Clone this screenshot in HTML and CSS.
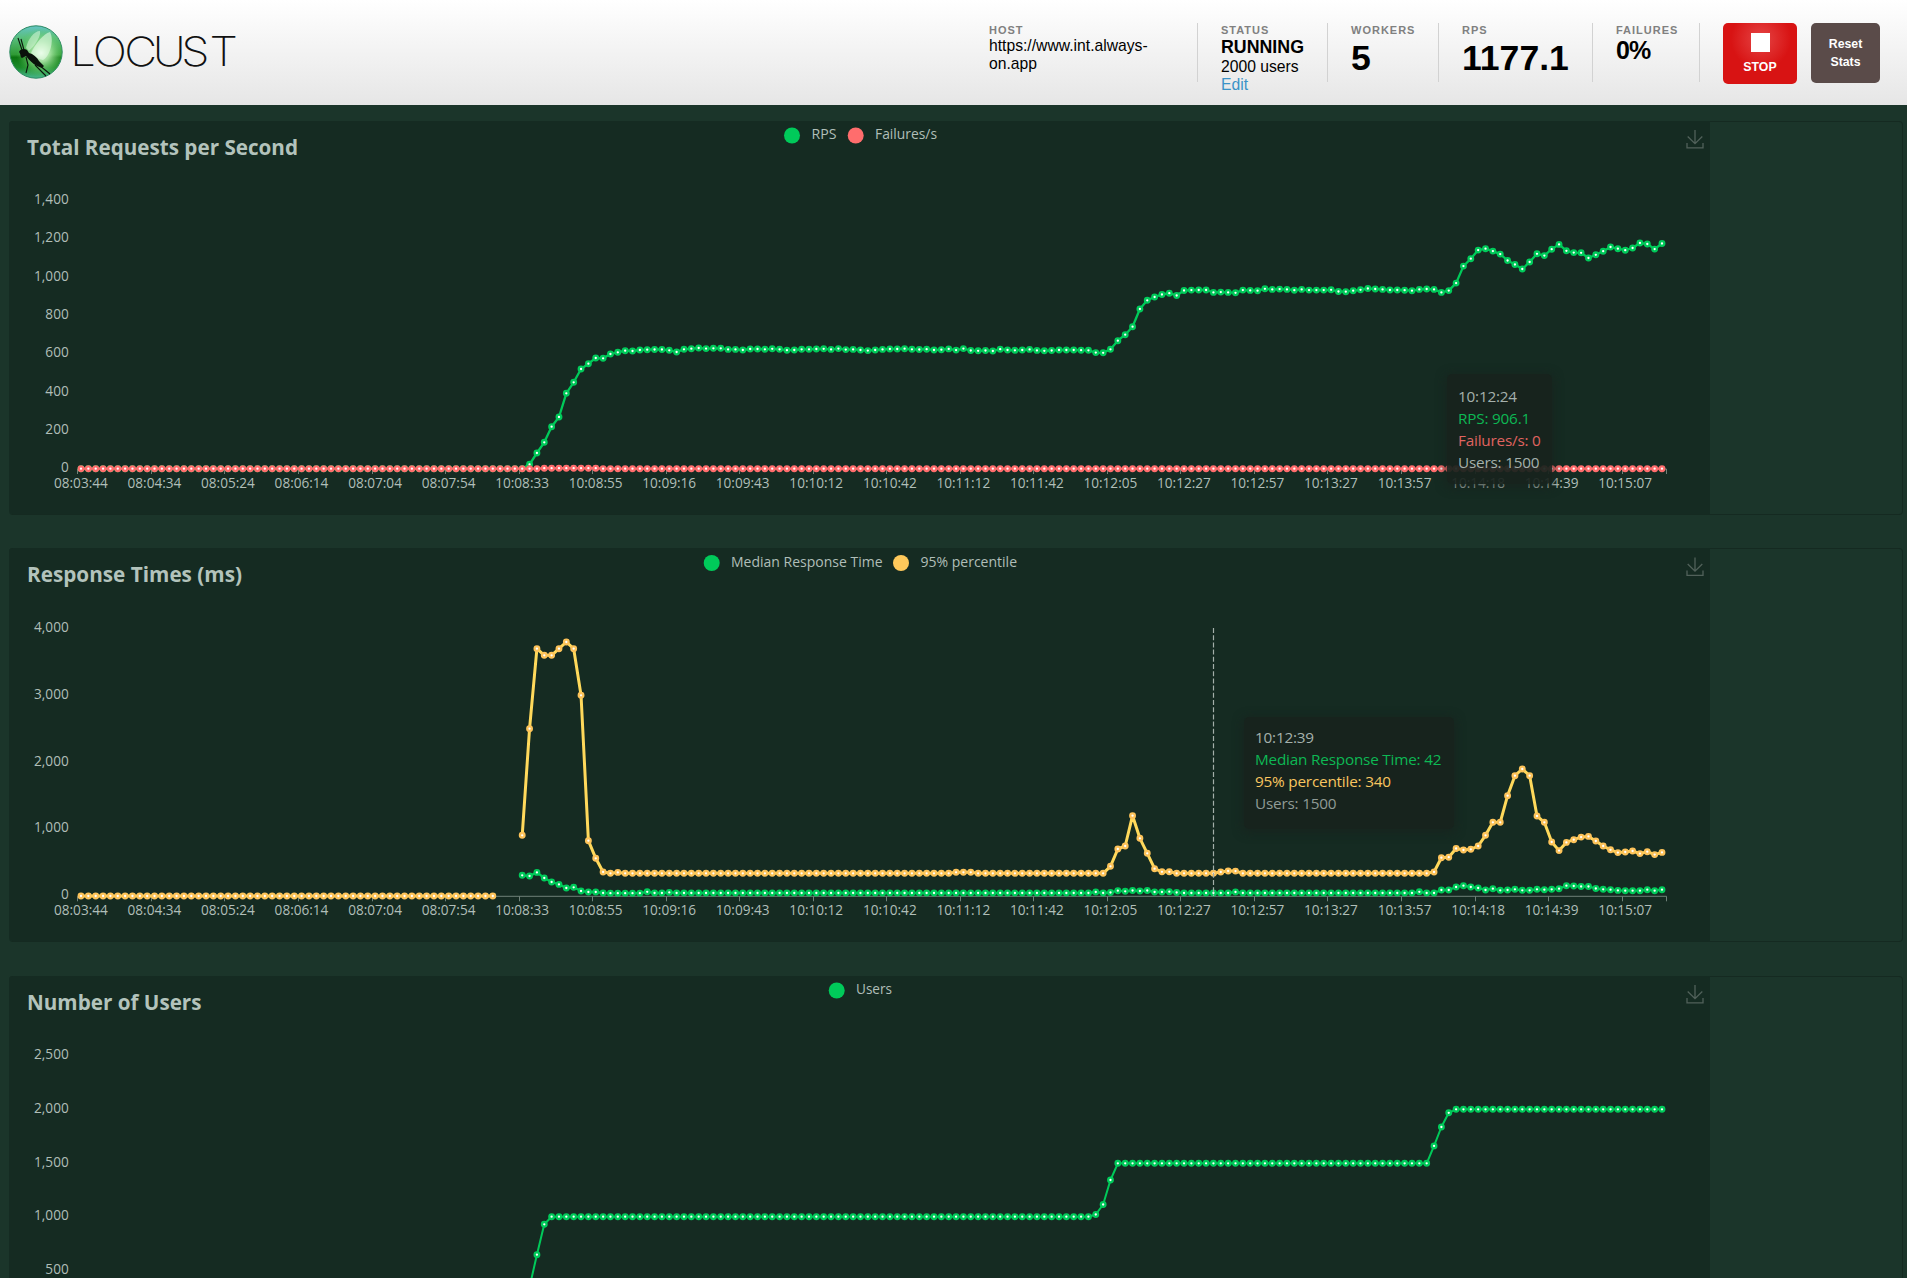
FILE: index.html
```html
<!DOCTYPE html>
<html lang="en">
<head>
<meta charset="utf-8">
<title>Locust</title>
<link rel="stylesheet" href="styles.css">
</head>
<body>
<header class="top">
  <svg class="logo" width="240" height="105" viewBox="0 0 240 105" role="img" aria-label="Locust">
    <defs>
      <linearGradient id="ball" x1="0" y1="0" x2="0" y2="1">
        <stop offset="0" stop-color="#63c3c4"/><stop offset=".22" stop-color="#5abf80"/>
        <stop offset=".55" stop-color="#2f9a35"/><stop offset=".6" stop-color="#0b7410"/>
        <stop offset=".8" stop-color="#1c8b2b"/><stop offset="1" stop-color="#48b790"/>
      </linearGradient>
      <radialGradient id="glow" cx=".6" cy=".52" r=".48">
        <stop offset="0" stop-color="#f0fff0"/><stop offset=".35" stop-color="#b5edb0" stop-opacity=".85"/>
        <stop offset="1" stop-color="#4dc24a" stop-opacity="0"/>
      </radialGradient>
    </defs>
    <circle cx="36" cy="52" r="26.2" fill="url(#ball)" stroke="#2c8a62"/>
    <circle cx="36" cy="52" r="26" fill="url(#glow)"/>
    <path d="M26 48C28 39 34 31 40 31C41 36 36 44 29 51Z" fill="#d9f7dd" opacity=".55"/>
    <path d="M31 53C36 43 43 34 50 32C54 39 51 55 43 60C38 59 34 57 31 53Z" fill="#e6fbe6" opacity=".6"/>
    <path d="M19 52C20 49 24 48 27 50L29 53C33 54 37 57 39 61L44 66L42 68L37 66C33 64 29 60 26 56L22 58C20 57 21 54 19 52Z" fill="#0a120b"/>
    <path d="M22 50L18 38M24 50L21 39M26 57L28 65L26 73M35 65L46 76M39 65L50 74" fill="none" stroke="#0a160c" stroke-width="1.1"/>
    <text class="wordmark" transform="scale(1.12 1)" y="66" x="62.7 82.8 111 136.4 161.8 187">LOCUST</text>
  </svg>
  <div class="stats">
    <div class="stat host"><div class="label">HOST</div><div class="text">https://www.int.always-on.app</div></div>
    <div class="stat status"><div class="label">STATUS</div><div class="state">RUNNING</div><div class="text">2000 users</div><a class="edit">Edit</a></div>
    <div class="stat workers"><div class="label">WORKERS</div><div class="big">5</div></div>
    <div class="stat rps"><div class="label">RPS</div><div class="big">1177.1</div></div>
    <div class="stat failures"><div class="label">FAILURES</div><div class="medium">0%</div></div>
  </div>
  <div class="btn stop"><span class="square"></span>STOP</div>
  <div class="btn reset">Reset<br>Stats</div>
</header>
<main class="charts">
  <section class="panel"><svg id="rps" class="chart" width="1701" height="393" viewBox="9 121 1701 393"></svg>
    <div class="tip tip-rps"><div>10:12:24</div><div class="green">RPS: 906.1</div><div class="red">Failures/s: 0</div><div>Users: 1500</div></div>
  </section>
  <section class="panel"><svg id="times" class="chart" width="1701" height="393" viewBox="9 548 1701 393"></svg>
    <div class="tip tip-times"><div>10:12:39</div><div class="green">Median Response Time: 42</div><div class="yellow">95% percentile: 340</div><div class="dim">Users: 1500</div></div>
  </section>
  <section class="panel last"><svg id="users" class="chart" width="1701" height="393" viewBox="9 976 1701 393"></svg></section>
</main>
<script src="charts.js"></script>
</body>
</html>
```
FILE: styles.css
```css
* { box-sizing: border-box; }
body { margin: 0; height: 1278px; overflow: hidden; background: #1b352a; font-family: "Liberation Sans", Arial, sans-serif; }
.top { display: flex; align-items: flex-start; height: 105px; padding-right: 27px; background: linear-gradient(#fff, #e6e6e6); }
.logo { display: block; }
.wordmark { font: 200 40.5px Inter, Lato, sans-serif; fill: #111; }
.stats { display: flex; margin: 23px 23px 0 auto; }
.stat { height: 59px; padding-left: 23px; border-right: 1px solid #d2d2d2; color: #000; white-space: nowrap; }
.host { width: 232px; padding-right: 23px; white-space: normal; }
.status { width: 130px; }
.workers { width: 111px; }
.rps { width: 154px; }
.failures { width: 107px; }
.label { height: 14px; line-height: 14px; font-size: 11px; font-weight: bold; letter-spacing: 1px; color: #808080; }
.text, .edit { display: block; font-size: 15.7px; line-height: 18px; }
.state { font-size: 17.8px; font-weight: bold; line-height: 21px; }
.edit { color: #3b93c7; }
.big { font-size: 35.6px; font-weight: bold; line-height: 42px; }
.medium { font-size: 25px; font-weight: bold; line-height: 27px; letter-spacing: -1px; }
.btn { margin-top: 23px; border-radius: 5px; color: #fff; font-size: 12.3px; font-weight: bold; text-align: center; }
.stop { display: flex; flex-direction: column; align-items: center; width: 74px; height: 61px; padding-top: 10px; line-height: 30px; background: radial-gradient(circle at 38px 16px, #e54545, #d81313 30px); }
.square { flex: none; width: 19px; height: 19px; background: #fff; }
.reset { width: 69px; height: 60px; margin-left: 14px; padding-top: 12px; line-height: 18px; background: #5a4b49; }
.charts { display: flex; flex-direction: column; gap: 33px; height: 1173px; overflow: hidden; padding: 16px 4px 0 9px; }
.panel { position: relative; flex: none; height: 394px; border: 1px solid #152a21; border-left: 0; border-radius: 4px; }
.last { margin-top: 1px; }
.chart { display: block; margin-top: -1px; border-radius: 4px 0 0 4px; background: #152b22; }
.chart text { font-family: "Open Sans", "Noto Sans", sans-serif; font-size: 13.6px; fill: #b0beb8; }
.chart .title { font-size: 22px; font-weight: bold; fill: #b3c3bc; }
.chart .legend { font-size: 13.8px; }
.tip { position: absolute; border-radius: 5px; background: rgba(24, 34, 29, .93); box-shadow: 0 2px 10px 2px rgba(24, 34, 29, .65); color: #a5b1ac; font: 15.3px/22px "Open Sans", "Noto Sans", sans-serif; letter-spacing: -.2px; white-space: nowrap; }
.tip-rps { left: 1438px; top: 252px; width: 105px; height: 110px; padding: 11px; }
.tip-times { left: 1235px; top: 168px; width: 210px; height: 112px; padding: 9px 11px; }
.green { color: #0db854; }
.red { color: #e06460; }
.yellow { color: #f9c660; }
.dim { color: #909b96; }
```
FILE: charts.js
```js
const NS = "http://www.w3.org/2000/svg";
const X0 = 81, STEP = 7.3535;
const GREEN = "#00ca5a", RED = "#ff6d6d", YELLOW = "#ffd95b";
const times = ["08:03:44","08:04:34","08:05:24","08:06:14","08:07:04","08:07:54","10:08:33","10:08:55","10:09:16","10:09:43","10:10:12","10:10:42","10:11:12","10:11:42","10:12:05","10:12:27","10:12:57","10:13:27","10:13:57","10:14:18","10:14:39","10:15:07"];
const rep = (v, n) => Array(n).fill(v);
const xAt = i => X0 + i * STEP;

function add(svg, tag, attrs, text) {
  const el = document.createElementNS(NS, tag);
  for (const k in attrs) el.setAttribute(k, attrs[k]);
  if (text) el.textContent = text;
  svg.appendChild(el);
  return el;
}

function series(svg, ys, start, line, dot, width) {
  const pts = ys.map((y, i) => [xAt(start + i).toFixed(2), y]);
  add(svg, "polyline", { points: pts.join(" "), fill: "none", stroke: line, "stroke-width": width, "stroke-linejoin": "bevel" });
  for (const [x, y] of pts) add(svg, "circle", { cx: x, cy: y, r: 2.3, fill: "#fff", stroke: dot, "stroke-width": 2.3 });
}

function frame(id, o) {
  const svg = document.getElementById(id);
  const t = o.top;
  add(svg, "text", { class: "title", x: 27, y: t + 33.7, textLength: o.titleWidth, lengthAdjust: "spacingAndGlyphs" }, o.title);
  for (const [cx, color, x, w, label] of o.legend) {
    add(svg, "circle", { cx, cy: t + 14.5, r: 8, fill: color });
    add(svg, "text", { class: "legend", x, y: t + 18.3, textLength: w, lengthAdjust: "spacingAndGlyphs" }, label);
  }
  add(svg, "path", { d: `M1695 ${t + 9}v13.5M1687.7 ${t + 15.5}l7.3 7.2l7.3 -7.2M1687 ${t + 22}v4.8h16v-4.8`, fill: "none", stroke: "#51615a", "stroke-width": 1.3 });
  o.labels.forEach((s, i) => add(svg, "text", { x: 68.7, y: o.labelY + i * o.labelStep, "text-anchor": "end" }, s));
  if (!o.axis) return svg;
  const ax = o.axis;
  add(svg, "path", { d: `M78 ${ax}H1666.5`, stroke: "#6f8179", "stroke-width": 1 });
  times.forEach((s, i) => {
    const x = xAt(i * 10);
    add(svg, "path", { d: `M${Math.round(x - 3.6) + .5} ${ax}v5`, stroke: "#6f8179" });
    add(svg, "text", { x: x - .1, y: ax + 18.6, "text-anchor": "middle" }, s);
  });
  add(svg, "path", { d: `M1666.5 ${ax}v5`, stroke: "#6f8179" });
  return svg;
}

const rps = frame("rps", {
  top: 121, title: "Total Requests per Second", titleWidth: 271, axis: 469,
  legend: [[792, GREEN, 811.5, 25, "RPS"], [855.7, RED, 875, 62, "Failures/s"]],
  labels: ["1,400","1,200","1,000","800","600","400","200","0"], labelY: 204, labelStep: 38.33
});
series(rps, [...rep(468.7, 61),
  464.3,453,442.3,426.7,417,393.3,382.3,369,363.7,358,358.3,354,352.3,350.7,351,350,349.7,349.5,349.5,350.3,352,349.3,348.7,348,348.6,348.3,348.3,349.4,349.4,350,349,349,349.3,348.8,349.3,350.2,350,349.3,349.3,349,348.8,349.4,348.6,349.6,349.4,350,350.6,350,349.4,349,349,
  348.7,349.3,349.5,349.2,350,349.7,348.9,350.1,348.6,350.5,350.8,350.5,351,349.2,350,350.3,350,349.4,350.4,350.8,350.5,350,
  350,350,350.2,350.3,352.6,352.8,349.3,340.7,334.7,326.7,309,300.3,297,294.5,293.2,295.5,290.5,290.1,290,290,292.4,292.1,292.4,292.8,290.1,290.4,290.7,288.8,289.4,289.1,289.4,290.2,289.4,290.1,290.1,290.1,289.8,291.5,291.7,290.7,289.8,288.5,289,289.4,290,290,290.2,290.7,289.4,289,289.4,292.4,290.6,283.1,
  266.1,258.7,250.1,248.7,251.1,254.1,260.5,264.5,269,262,253.8,255.6,249.2,244.4,250.8,252.6,252.8,258,254.8,251.2,247,248.7,250.2,248,243,244,249.1,243.5], 0, GREEN, GREEN, 2.3);
series(rps, [...rep(468.7, 63), ...rep(468.2, 8), ...rep(468.7, 145)], 0, RED, RED, 2.3);

const resp = frame("times", {
  top: 548.5, title: "Response Times (ms)", titleWidth: 215, axis: 896.3,
  legend: [[711.7, GREEN, 731, 151.5, "Median Response Time"], [901, "#ffc95b", 920.5, 96.5, "95% percentile"]],
  labels: ["4,000","3,000","2,000","1,000","0"], labelY: 631.7, labelStep: 66.9
});
series(resp, [875.3,876,872.4,878,882,884.4,888,887.3,891,892,892,893,...rep(893.2,5),891.8,893,893,892.4,...rep(893,57),892,893,892.5,890.7,891.3,890.5,891,890.5,892,892,891.7,892.5,...rep(893,7),892,...rep(893,24),891.8,893,893,890,890,887,885.7,887,888,890,888.7,890.3,890,889.3,890.3,890.3,889.3,889.7,889.3,888.7,885.7,886,886.5,886.5,888.5,889.3,889.7,890.4,890.7,890.7,890.7,889.7,890.7,889.7], 60, GREEN, GREEN, 2.3);
series(resp, rep(896, 57), 0, YELLOW, "#fdc35a", 3);
series(resp, [835.3,728.7,648.7,655.3,655.3,648.7,642,648.7,695.3,840.7,858.3,872,873.3,872.4,...rep(873.3,45),872.3,872.3,872.3,...rep(873.3,18),866.3,849,846,815.7,838.3,853.3,868.7,871.8,871.8,...rep(873.3,6),872,871,871.1,...rep(873.3,26),872,857.7,857.2,848.5,850,849.3,846,835.3,822.3,822.3,795.7,775.7,769,775.7,816,822.3,842,850.6,842.4,839.7,837.1,836.4,841,846,849.8,852.6,852,851,853.6,851.7,854.6,852.4], 60, YELLOW, "#fdc35a", 3);
add(resp, "path", { d: "M1213.5 628V896", stroke: "#a3afa9", "stroke-width": 1.2, "stroke-dasharray": "5 2.2" });

const users = frame("users", {
  top: 976, title: "Number of Users", titleWidth: 174.5,
  legend: [[836.7, GREEN, 856, 36, "Users"]],
  labels: ["2,500","2,000","1,500","1,000","500"], labelY: 1059.1, labelStep: 53.75
});
series(users, [...rep(1324, 61), 1287,1254.7,1224.3,...rep(1216.7,74),1214.5,1204.5,1180,...rep(1163.3,43),1145.9,1127,1112.8,...rep(1109.3,29)], 0, GREEN, GREEN, 2);
```
